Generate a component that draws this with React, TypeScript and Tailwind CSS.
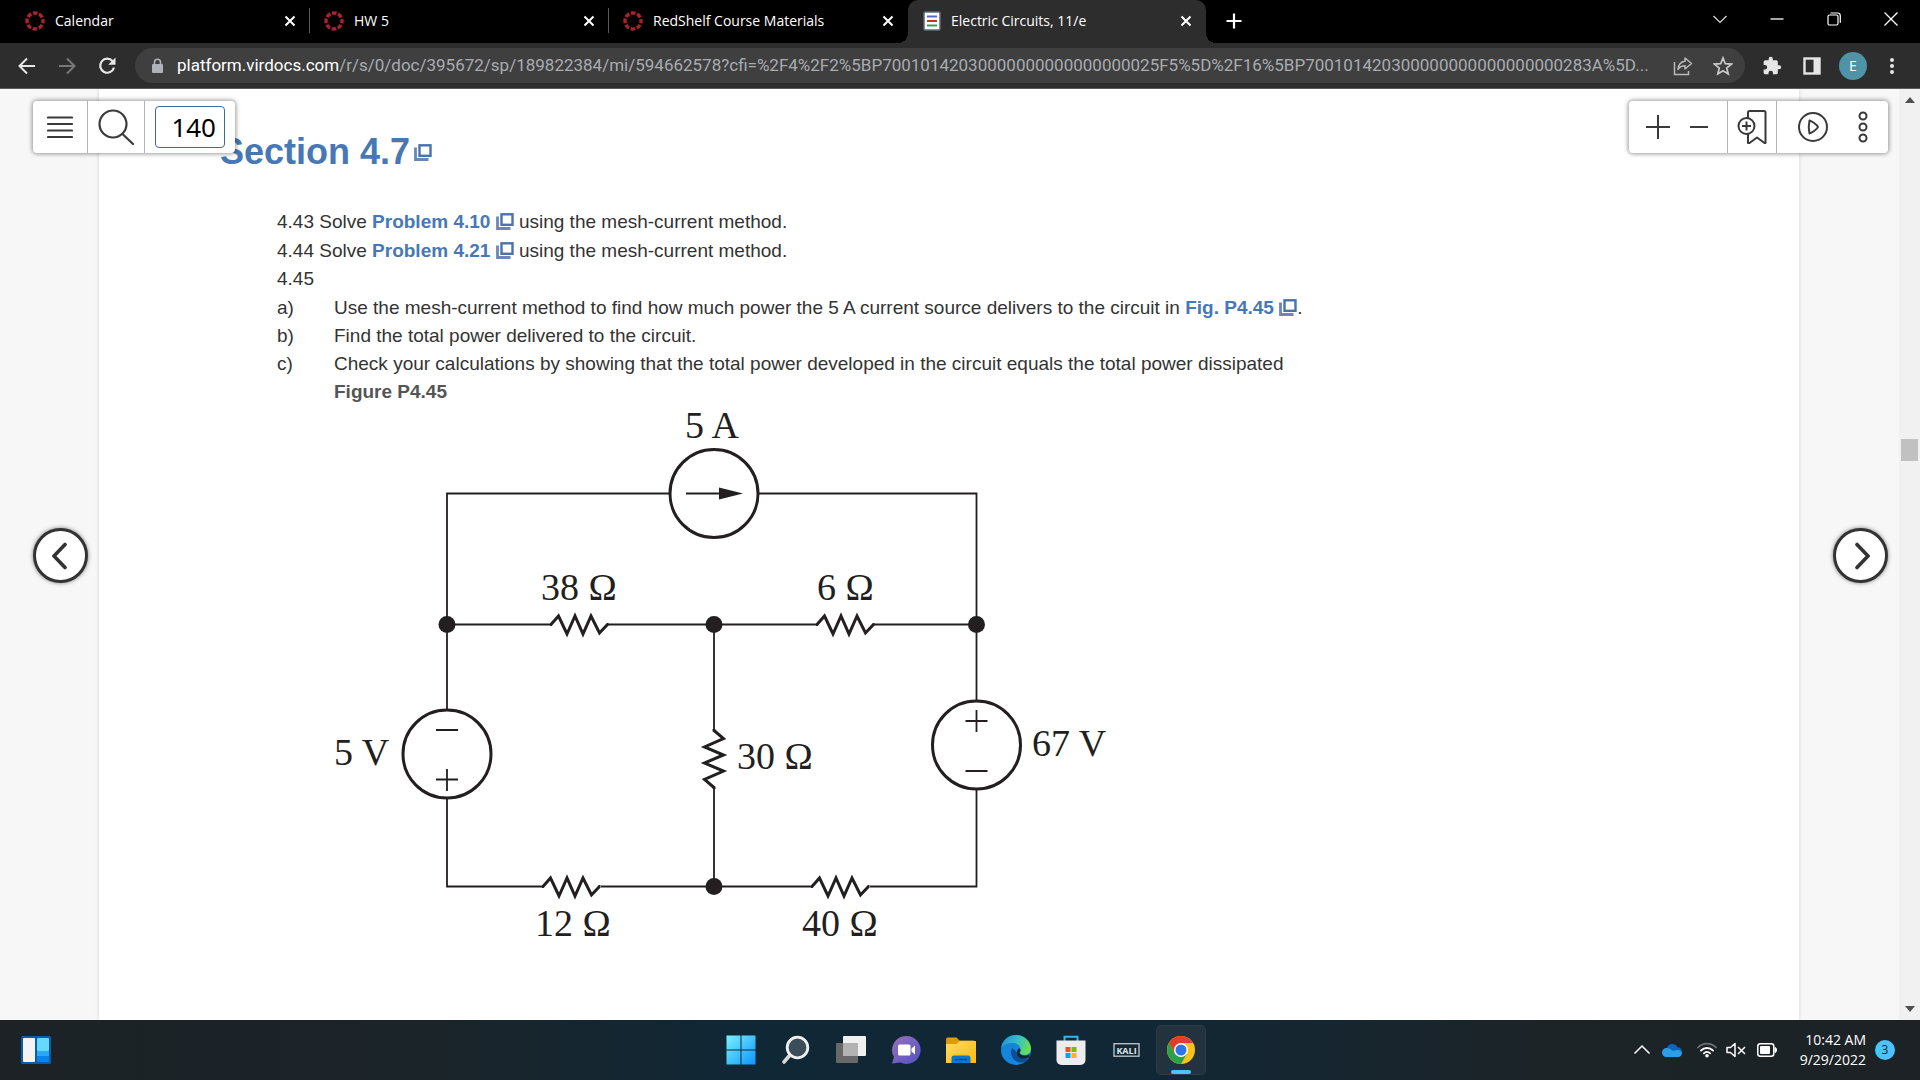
import React from "react";

const UI = "font-['Open_Sans','Noto_Sans',sans-serif]";

const ZEROS = "0".repeat(17);
const URL_PATH = `/r/s/0/doc/395672/sp/189822384/mi/594662578?cfi=%2F4%2F2%5BP7001014203${ZEROS}25F5%5D%2F16%5BP7001014203${ZEROS}283A%5D...`;

function CanvasLogo() {
  return (
    <svg width="20" height="20" viewBox="0 0 20 20" fill="none" aria-hidden="true">
      <circle cx="10" cy="10" r="8" stroke="#a9232f" strokeWidth="3.4" strokeDasharray="4.6 1.68" strokeDashoffset="2.3" />
    </svg>
  );
}

function BookLogo() {
  return (
    <svg width="18" height="20" viewBox="0 0 18 20" aria-hidden="true">
      <rect x="1" y="1" width="16" height="18" rx="1" fill="#fff" stroke="#5d6b78" strokeWidth="1.5" />
      <path d="M4 5.5h10" stroke="#4d6fb5" strokeWidth="2" />
      <path d="M4 10h10" stroke="#c9302c" strokeWidth="2" />
      <path d="M4 14.5h10" stroke="#3f9a5a" strokeWidth="2" />
    </svg>
  );
}

function Cross() {
  return (
    <svg width="12" height="12" viewBox="0 0 12 12" stroke="#fff" strokeWidth="2" aria-hidden="true">
      <path d="M1.5 1.5l9 9M10.5 1.5l-9 9" />
    </svg>
  );
}

function Tab({ title, divider }: { title: string; divider?: boolean }) {
  return (
    <div className="flex h-full w-[299px] shrink-0 items-center pb-[2px]">
      <button className="flex min-w-0 flex-1 items-center gap-[10px] pl-[14px] text-left">
        <CanvasLogo />
        <span className="truncate">{title}</span>
      </button>
      <button aria-label={`Close ${title}`} className="mr-[13px]">
        <Cross />
      </button>
      <span className={divider ? "h-[25px] w-px bg-[#5a5a5a]" : "h-[25px] w-px"} />
    </div>
  );
}

function TabStrip() {
  return (
    <div className="flex h-[43px] shrink-0 items-stretch bg-black pl-[11px] text-[14px] text-white">
      <Tab title="Calendar" divider />
      <Tab title="HW 5" divider />
      <Tab title="RedShelf Course Materials" />
      <div className="relative flex w-[298px] shrink-0 items-center rounded-t-[10px] bg-[#2d2d2d] pb-[2px]">
        <span className="absolute -left-[10px] bottom-0 size-[10px] bg-[radial-gradient(circle_at_0_0,#000_10px,#2d2d2d_10px)]" />
        <span className="absolute -right-[10px] bottom-0 size-[10px] bg-[radial-gradient(circle_at_100%_0,#000_10px,#2d2d2d_10px)]" />
        <button className="flex min-w-0 flex-1 items-center gap-[10px] pl-[15px] text-left">
          <BookLogo />
          <span className="truncate">Electric Circuits, 11/e</span>
        </button>
        <button aria-label="Close Electric Circuits" className="mr-[14px]">
          <Cross />
        </button>
      </div>
      <button aria-label="New tab" className="ml-[20px] pb-[2px]">
        <svg width="16" height="16" viewBox="0 0 16 16" stroke="#fff" strokeWidth="2.2">
          <path d="M8 .5v15M.5 8h15" />
        </svg>
      </button>
      <div className="mb-[6px] ml-auto flex items-center gap-[41px] pr-[21px]">
        <button aria-label="Search tabs">
          <svg width="16" height="16" viewBox="0 0 16 16" fill="none" stroke="#ddd" strokeWidth="1.2">
            <path d="M1.5 5L8 11.5 14.5 5" />
          </svg>
        </button>
        <button aria-label="Minimize">
          <svg width="16" height="16" viewBox="0 0 16 16" stroke="#fff" strokeWidth="1.3">
            <path d="M1.5 8h13" />
          </svg>
        </button>
        <button aria-label="Restore">
          <svg width="16" height="16" viewBox="0 0 16 16" fill="none" stroke="#fff" strokeWidth="1.2">
            <rect x="2" y="4" width="10" height="10" rx="1.5" />
            <path d="M4.5 2h7a2.800 2.800 0 0 1 2.800 2.800v7" />
          </svg>
        </button>
        <button aria-label="Close window">
          <svg width="16" height="16" viewBox="0 0 16 16" stroke="#fff" strokeWidth="1.3">
            <path d="M1.5 1.5l13 13M14.5 1.5l-13 13" />
          </svg>
        </button>
      </div>
    </div>
  );
}

function AddressBar() {
  return (
    <div className="flex h-[46px] shrink-0 items-center border-b border-[#5b5b5b] bg-[#2d2d2d] pl-[17px] pr-[23px]">
      <button aria-label="Back">
        <svg width="20" height="20" viewBox="0 0 20 20" fill="none" stroke="#e6e6e6" strokeWidth="2">
          <path d="M18 10H3M10 2.5L2.5 10l7.5 7.5" />
        </svg>
      </button>
      <button aria-label="Forward" className="ml-[20px]">
        <svg width="20" height="20" viewBox="0 0 20 20" fill="none" stroke="#777" strokeWidth="2">
          <path d="M2 10h15M10 2.5l7.5 7.5-7.5 7.5" />
        </svg>
      </button>
      <button aria-label="Reload" className="ml-[20px]">
        <svg width="20" height="20" viewBox="0 0 20 20" fill="none" stroke="#e6e6e6" strokeWidth="2.2">
          <path d="M15.600 5.200A7 7 0 1 0 17 11.500" />
          <path d="M18.5 1.500v7.300h-7.300z" fill="#e6e6e6" stroke="none" />
        </svg>
      </button>
      <div className="ml-[18px] flex h-[35px] min-w-0 flex-1 items-center rounded-full bg-[#3f3f3f] pl-[16px] pr-[12px]">
        <svg width="13" height="16" viewBox="0 0 13 16" fill="none" aria-hidden="true">
          <rect x="1" y="6" width="11" height="9" rx="1" fill="#aeb2b8" />
          <path d="M3.5 7V4.200a3 3 0 0 1 6 0V7" stroke="#aeb2b8" strokeWidth="1.6" />
        </svg>
        <div className="ml-[13px] min-w-0 flex-1 whitespace-nowrap font-['Roboto',sans-serif] text-[17px] text-[#a9acb1]">
          <span className="text-white">platform.virdocs.com</span>
          {URL_PATH}
        </div>
        <button aria-label="Share" className="ml-[20px]">
          <svg width="20" height="20" viewBox="0 0 20 20" fill="none" stroke="#b9b9b9" strokeWidth="1.5">
            <path d="M1.5 6v12.500h14V15" />
            <path d="M12 2l6.500 5.500L12 13v-3.300c-3.500 0-5.500 1.200-7 3.800.3-4.500 2.700-7.700 7-8.200z" strokeLinejoin="round" />
          </svg>
        </button>
        <button aria-label="Bookmark" className="ml-[20px]">
          <svg width="20" height="20" viewBox="0 0 20 20" fill="none" stroke="#c9c9c9" strokeWidth="1.7">
            <path d="M10 2l2.300 5.700 6.100.4-4.700 3.900 1.500 6L10 14.700 4.800 18l1.500-6-4.700-3.900 6.100-.4z" />
          </svg>
        </button>
      </div>
      <button aria-label="Extensions" className="ml-[17px]">
        <svg width="20" height="20" viewBox="0 0 24 24" fill="#e6e6e6">
          <path d="M20.500 11H19V7a2 2 0 0 0-2-2h-4V3.500a2.500 2.500 0 0 0-5 0V5H4a2 2 0 0 0-2 2v3.800h1.500a2.700 2.700 0 0 1 0 5.400H2V20a2 2 0 0 0 2 2h3.800v-1.500a2.700 2.700 0 0 1 5.400 0V22H17a2 2 0 0 0 2-2v-4h1.500a2.500 2.500 0 0 0 0-5z" />
        </svg>
      </button>
      <button aria-label="Side panel" className="ml-[21px]">
        <svg width="18" height="18" viewBox="0 0 18 18" fill="none">
          <rect x="1.5" y="1.5" width="15" height="15" stroke="#e6e6e6" strokeWidth="2.4" />
          <path d="M10.500 1h6.500v16h-6.500z" fill="#e6e6e6" />
        </svg>
      </button>
      <button className="ml-[18px] grid size-[28px] place-items-center rounded-full bg-[#4f93a6] text-[14px] text-white">E</button>
      <button aria-label="Menu" className="ml-[20px]">
        <svg width="10" height="20" viewBox="0 0 10 20" fill="#e6e6e6">
          <circle cx="5" cy="4" r="2" />
          <circle cx="5" cy="10" r="2" />
          <circle cx="5" cy="16" r="2" />
        </svg>
      </button>
    </div>
  );
}

function PopupIcon() {
  return (
    <svg width="18" height="17" viewBox="0 0 18 17" fill="none" className="inline-block align-[-2px]" aria-hidden="true">
      <rect x="5.5" y="1.3" width="11" height="10.500" stroke="#4a73aa" strokeWidth="2.400" />
      <path d="M1.5 3.500v12h13" stroke="#6a88b6" strokeWidth="2.800" />
    </svg>
  );
}

function BookLink({ children }: { children: React.ReactNode }) {
  return (
    <a href="#figure" className="font-bold text-[#4778b6]">
      {children} <PopupIcon />
    </a>
  );
}

function HResistor({ x, y }: { x: number; y: number }) {
  return (
    <path
      d={`M${x} ${y}h1l7.500-8.500 8.500 18 8-18 8 18 8-18 8.500 17 8-8.500h1`}
      fill="none"
      stroke="#231f20"
      strokeWidth="3"
    />
  );
}

const LABELS: [string, number, number][] = [
  ["5 A", 685, 438],
  ["38 Ω", 541, 600],
  ["6 Ω", 817, 600],
  ["5 V", 334, 765],
  ["30 Ω", 737, 769],
  ["67 V", 1032, 756],
  ["12 Ω", 535, 936],
  ["40 Ω", 802, 936],
];

function Circuit() {
  return (
    <svg width="800" height="550" viewBox="320 406 800 550" className="block shrink-0 overflow-visible" role="img" aria-label="Figure P4.45 circuit">
      <g fill="none" stroke="#231f20" strokeWidth="1.8">
        <path d="M447 709V493.500h222M758 493.500h218.500V701M447 798v88.500h96M601 886.500h211M870 886.500h106.500V789" />
        <path d="M447 624.500h104M608 624.500h210M874 624.500h102.500M714 624.500V731M714 787v99.500" />
        <path d="M436 730h22M436 779.500h22M447 769v22M965.500 721h22M976.500 710v22M965.500 771h22" />
        <path d="M686 493.500h36" />
      </g>
      <path d="M719 487.500l24 6-24 6z" fill="#231f20" />
      <HResistor x={550} y={624.5} />
      <HResistor x={816} y={624.5} />
      <HResistor x={542} y={886.5} />
      <HResistor x={811} y={886.5} />
      <path d="M714 729v1.500l9.500 8-19 8.500 19 8-19 8 19 8-19 8.500 9.500 8v1.500" fill="none" stroke="#231f20" strokeWidth="3" />
      <g fill="none" stroke="#231f20" strokeWidth="3">
        <circle cx="714" cy="493.5" r="44" />
        <circle cx="447" cy="754" r="44" />
        <circle cx="976.5" cy="745" r="44" />
      </g>
      <g fill="#231f20">
        <circle cx="447" cy="624.5" r="8.5" />
        <circle cx="714" cy="624.5" r="8.5" />
        <circle cx="976.5" cy="624.5" r="8.5" />
        <circle cx="714" cy="886.5" r="8.5" />
      </g>
      <g fill="#231f20" className="font-['Liberation_Serif',serif] text-[38px]">
        {LABELS.map(([t, x, y]) => (
          <text key={t} x={x} y={y}>{t}</text>
        ))}
      </g>
    </svg>
  );
}

function Article() {
  return (
    <main className="min-w-0 flex-1 bg-white pl-[121px] pt-[41px] font-['Liberation_Sans',Arial,sans-serif] text-[#333] shadow-[0_0_4px_rgba(0,0,0,0.15)]">
      <h1 className="flex items-center gap-[4px] text-[36px] font-bold leading-[44px] text-[#4778b6]">
        Section 4.7 <PopupIcon />
      </h1>
      <div className="pl-[57px] pt-[34px] text-[19px] leading-[28px]">
        <p className="pb-px">4.43 Solve <BookLink>Problem 4.10</BookLink> using the mesh-current method.</p>
        <p>4.44 Solve <BookLink>Problem 4.21</BookLink> using the mesh-current method.</p>
        <p className="pb-px">4.45</p>
        <ol>
          <li className="flex"><span className="w-[57px]">a)</span><span>Use the mesh-current method to find how much power the 5 A current source delivers to the circuit in <BookLink>Fig. P4.45</BookLink>.</span></li>
          <li className="flex"><span className="w-[57px]">b)</span><span>Find the total power delivered to the circuit.</span></li>
          <li className="flex"><span className="w-[57px]">c)</span><span>Check your calculations by showing that the total power developed in the circuit equals the total power dissipated</span></li>
        </ol>
      </div>
      <figure className="pl-[44px]">
        <figcaption className="pl-[70px] text-[19px] font-bold leading-[28px] text-[#555]">Figure P4.45</figcaption>
        <div className="pl-[56px]"><Circuit /></div>
      </figure>
    </main>
  );
}

const BOX = "absolute top-[12px] flex h-[52px] items-stretch rounded-[4px] bg-white shadow-[0_0_4px_1px_rgba(0,0,0,0.4)]";

function ReaderTools() {
  return (
    <>
      <div className={`${BOX} left-[33px] w-[202px]`}>
        <button aria-label="Contents" className="grid w-[55px] place-items-center border-r border-[#b5b5b5]">
          <svg width="26" height="26" viewBox="0 0 26 26" stroke="#3a3a3a" strokeWidth="2.2" strokeLinecap="round">
            <path d="M1 3.500h24M1 10h24M1 16.500h24M1 23h24" />
          </svg>
        </button>
        <button aria-label="Search" className="grid w-[57px] place-items-center border-r border-[#b5b5b5]">
          <svg width="36" height="36" viewBox="0 0 36 36" fill="none" stroke="#3a3a3a" strokeWidth="2.2" strokeLinecap="round">
            <circle cx="15" cy="15" r="13.5" />
            <path d="M24.500 25L35 35" />
          </svg>
        </button>
        <div className="flex flex-1 items-center pl-[10px]">
          <input aria-label="Page" defaultValue="140" className="h-[42px] w-[70px] rounded-[4px] border border-[#3a6c9f] bg-white pr-[8px] text-right text-[26px] font-['Noto_Sans',sans-serif] text-black" />
        </div>
      </div>
      <div className={`${BOX} right-[32px] w-[259px]`}>
        <button aria-label="Zoom in" className="pl-[17px]">
          <svg width="24" height="24" viewBox="0 0 24 24" stroke="#3a3a3a" strokeWidth="2">
            <path d="M0 12h24M12 0v24" />
          </svg>
        </button>
        <button aria-label="Zoom out" className="w-[58px] border-r border-[#b5b5b5] pl-[20px]">
          <svg width="18" height="24" viewBox="0 0 18 24" stroke="#3a3a3a" strokeWidth="2">
            <path d="M0 12h18" />
          </svg>
        </button>
        <button aria-label="Add bookmark" className="grid w-[49px] place-items-center border-r border-[#b5b5b5]">
          <svg width="30" height="36" viewBox="0 0 30 36" fill="none" stroke="#3a3a3a" strokeWidth="2">
            <path d="M11 9V3.500A1.500 1.500 0 0 1 12.500 2H27a1.500 1.500 0 0 1 1.500 1.500V34h-1L20 28.500 12.500 34H11V25" strokeLinejoin="round" />
            <circle cx="9.5" cy="17" r="8" fill="#fff" />
            <path d="M5 17h9M9.500 12.500v9" />
          </svg>
        </button>
        <button aria-label="Play" className="pl-[20px]">
          <svg width="32" height="32" viewBox="0 0 32 32" fill="none" stroke="#3a3a3a" strokeWidth="2">
            <circle cx="16" cy="16" r="14" />
            <path d="M12.500 9.500c2 .5 7.500 4 8.500 6.500-1 2.500-6.500 6-8.500 6.500-.7-3-.7-10 0-13z" strokeLinejoin="round" />
          </svg>
        </button>
        <button aria-label="More" className="pl-[28px]">
          <svg width="12" height="32" viewBox="0 0 12 32" fill="none" stroke="#3a3a3a" strokeWidth="2">
            <circle cx="6" cy="5" r="3.5" />
            <circle cx="6" cy="16" r="3.5" />
            <circle cx="6" cy="27" r="3.5" />
          </svg>
        </button>
      </div>
    </>
  );
}

const ROUND = "absolute top-[439px] grid size-[55px] place-items-center rounded-full border-[3px] border-[#333] bg-white shadow-[0_0_4px_rgba(0,0,0,0.5)]";

function Viewer() {
  return (
    <div className="relative flex min-h-0 flex-1 overflow-hidden bg-[#f7f7f7]">
      <div className="w-[99px] shrink-0" />
      <Article />
      <div className="w-[100px] shrink-0" />
      <div className="flex w-[21px] shrink-0 flex-col items-center justify-between bg-[#f1f1f1] py-[8px]">
        <svg width="10" height="6" viewBox="0 0 10 6" fill="#505050"><path d="M5 0l5 6H0z" /></svg>
        <span className="mb-[210px] h-[22px] w-[17px] bg-[#c1c1c1]" />
        <svg width="10" height="6" viewBox="0 0 10 6" fill="#505050"><path d="M5 6l5-6H0z" /></svg>
      </div>
      <ReaderTools />
      <button aria-label="Previous page" className={`${ROUND} left-[33px]`}>
        <svg width="18" height="28" viewBox="0 0 18 28" fill="none" stroke="#333" strokeWidth="3.6" strokeLinecap="round"><path d="M13 2.500L2 14l11 11.500" /></svg>
      </button>
      <button aria-label="Next page" className={`${ROUND} right-[32px]`}>
        <svg width="18" height="28" viewBox="0 0 18 28" fill="none" stroke="#333" strokeWidth="3.6" strokeLinecap="round"><path d="M5 2.500L16 14 5 25.500" /></svg>
      </button>
    </div>
  );
}

function Gradient({ id, from, to }: { id: string; from: string; to: string }) {
  return (
    <linearGradient id={id} x1="0" y1="0" x2="1" y2="1">
      <stop offset="0" stopColor={from} />
      <stop offset="1" stopColor={to} />
    </linearGradient>
  );
}

const APPS: [string, React.ReactNode][] = [
  ["Start", <>
    <defs><linearGradient id="win" gradientUnits="userSpaceOnUse" x1="0" y1="0" x2="30" y2="30"><stop offset="0" stopColor="#7df3ff" /><stop offset="1" stopColor="#0a93fb" /></linearGradient></defs>
    <path fill="url(#win)" d="M.5.5h14v14H.5zM15.500.5h14v14h-14zM.5 15.500h14v14H.5zM15.500 15.500h14v14h-14z" />
  </>],
  ["Search", <>
    <path d="M9 20l-6 7" stroke="#d9d9d9" strokeWidth="3.6" strokeLinecap="round" />
    <circle cx="16.5" cy="12.5" r="10.3" fill="#3b4d59" stroke="#eee" strokeWidth="2.8" />
  </>],
  ["Task view", <>
    <rect x="7" y="1" width="23" height="20" rx="1" fill="#f0f0f0" />
    <rect x="0" y="8" width="22" height="20" rx="1" fill="#686868" />
    <rect x="7" y="8" width="15" height="13" fill="#b3b3b3" />
  </>],
  ["Chat", <>
    <defs><Gradient id="chat" from="#9a70b5" to="#4f52c8" /></defs>
    <path d="M15.500 1a14 14 0 1 1-6 26.600L1 28.500l2-6.500A14 14 0 0 1 15.500 1z" fill="url(#chat)" />
    <rect x="7" y="9.5" width="12.5" height="11" rx="1.5" fill="#fff" />
    <path d="M20.500 13.500l3.500-3v9l-3.500-3z" fill="#fff" />
  </>],
  ["File Explorer", <>
    <defs><Gradient id="fold" from="#ffdc60" to="#fbb911" /></defs>
    <path d="M0 4.500a2 2 0 0 1 2-2h8.500l3 3H28V14H0z" fill="#dd9b09" />
    <path d="M0 9h10.500l3-3H30v22H0z" fill="url(#fold)" />
    <path d="M5.500 28v-5a2.500 2.500 0 0 1 2.500-2.500h14a2.500 2.500 0 0 1 2.500 2.500v5z" fill="#0d76cc" />
    <path d="M9 24.500h12" stroke="#0a4a80" strokeWidth="1.3" />
  </>],
  ["Edge", <>
    <defs>
      <linearGradient id="ed1" x1="0" y1=".3" x2="1" y2=".6"><stop offset="0" stopColor="#2093dc" /><stop offset=".5" stopColor="#34c1c4" /><stop offset="1" stopColor="#6be04e" /></linearGradient>
      <linearGradient id="ed2" x1="0" y1="0" x2=".4" y2="1"><stop offset="0" stopColor="#1683cf" /><stop offset="1" stopColor="#1287e0" /></linearGradient>
    </defs>
    <circle cx="15" cy="15" r="15" fill="url(#ed2)" />
    <path d="M11 13c-3 7 2 14.500 9.500 14.500 3 0 5.500-1.500 7.500-4-5 1.500-11-1-11.500-6z" fill="#104d97" />
    <path d="M.2 12.500C1.500 5 7.500 0 15 0c8.500 0 15 6.500 15 13.500 0 4-3 6.500-6.500 6.500-3 0-5-1-5-2.500 0-1 1-1.500 1-3.500 0-3-3-6-7.500-6-5.500 0-9.500 2-11.800 4.500z" fill="url(#ed1)" />
    <path d="M28.500 22c-3 2.500-10 3-12-2-1-2.500-.5-5 1-6.500 1.500 0 2.500.5 2 2.500-1 1.500-1.500 2 .5 3.500 2 1.500 6 1.500 8.500-.5z" fill="#112734" />
  </>],
  ["Store", <>
    <path d="M8.500 6V1.800h13V6" fill="none" stroke="#2db9ee" strokeWidth="2" />
    <path d="M.5 5.500h29V25a5 5 0 0 1-5 5h-19a5 5 0 0 1-5-5z" fill="#ededed" />
    <path d="M9.500 12h5v5h-5z" fill="#f25022" /><path d="M15.500 12h5v5h-5z" fill="#7fba00" />
    <path d="M9.500 18h5v5h-5z" fill="#00a4ef" /><path d="M15.500 18h5v5h-5z" fill="#ffb900" />
  </>],
  ["Kali", <>
    <rect x="3" y="8.7" width="25" height="12.5" fill="none" stroke="#b6bfc5" strokeWidth="1.4" />
    <text x="15.5" y="18.5" textAnchor="middle" fill="#e2e6e8" className="text-[9px] font-bold">KALI</text>
  </>],
];

function Chrome() {
  return (
    <svg width="28" height="28" viewBox="0 0 28 28">
      <circle cx="14" cy="14" r="14" fill="#fbc116" />
      <path d="M1.900 7A14 14 0 0 0 14 28l6-10.500-6-3.500-6 3.500z" fill="#2aa148" />
      <path d="M14 14l-6 3.500L1.900 7A14 14 0 0 1 26.100 7H14z" fill="#e33b2e" />
      <circle cx="14" cy="14" r="7" fill="#fff" />
      <circle cx="14" cy="14" r="5.5" fill="#2b76e8" />
    </svg>
  );
}

function Taskbar() {
  return (
    <footer className="grid h-[60px] shrink-0 grid-cols-[1fr_auto_1fr] items-center bg-[linear-gradient(90deg,#1c2226_0%,#1b2429_22%,#102735_38%,#112735_60%,#1c2428_80%,#1c2226_100%)] text-white">
      <button aria-label="Widgets" className="ml-[21px] justify-self-start">
        <svg width="30" height="28" viewBox="0 0 30 28">
          <rect width="30" height="28" rx="1.5" fill="#0b5cab" />
          <rect x="2" y="2" width="12" height="24" rx="1" fill="#f3f3f3" />
          <rect x="16" y="2" width="12" height="13" rx="1" fill="#66d9ff" />
          <rect x="16" y="15" width="12" height="5" fill="#2aa9f7" />
          <rect x="16" y="20" width="12" height="6" rx="1" fill="#0a83ea" />
        </svg>
      </button>
      <nav className="flex items-center gap-[25px] pl-[12px]">
        {APPS.map(([name, art]) => (
          <button key={name} aria-label={name}>
            <svg width="30" height="30" viewBox="0 0 30 30" fill="none">{art}</svg>
          </button>
        ))}
        <button aria-label="Chrome" className="relative -ml-[10px] grid size-[50px] place-items-center rounded-[5px] border border-[#2c3d49] bg-[#22333f]">
          <Chrome />
          <span className="absolute bottom-0 left-[14px] h-[4px] w-[20px] rounded-full bg-[#4cc2ff]" />
        </button>
      </nav>
      <div className="mr-[25px] flex items-center justify-self-end">
        <button aria-label="Hidden icons">
          <svg width="18" height="18" viewBox="0 0 18 18" fill="none" stroke="#fff" strokeWidth="1.5"><path d="M1.500 12.500L9 5l7.500 7.500" /></svg>
        </button>
        <button aria-label="OneDrive" className="ml-[11px]">
          <svg width="20" height="14" viewBox="0 0 20 14">
            <path d="M5 5a5.500 5.500 0 0 1 10.300-.8A4.500 4.500 0 0 1 20 9l-8 2-10-2z" fill="#0f65bd" />
            <path d="M4.500 5C8 4.500 10 8 12 8c2-1 5-2 8 1.500a4 4 0 0 1-4 4.500H4.500a4.500 4.500 0 0 1 0-9z" fill="#2a9ee8" />
          </svg>
        </button>
        <button aria-label="Wi-Fi" className="ml-[15px]">
          <svg width="20" height="16" viewBox="0 0 20 16" fill="none" strokeLinecap="round" strokeWidth="1.8">
            <path d="M1 5.500a12.500 12.500 0 0 1 18 0" stroke="#6b7072" />
            <path d="M4 8.500a8.500 8.500 0 0 1 12 0M6.800 11.300a4.600 4.600 0 0 1 6.400 0" stroke="#fff" />
            <circle cx="10" cy="13.8" r="1.8" fill="#fff" />
          </svg>
        </button>
        <button aria-label="Volume" className="ml-[9px]">
          <svg width="20" height="16" viewBox="0 0 20 16" fill="none" stroke="#fff" strokeWidth="1.5">
            <path d="M1 5.500h3.500L9 1.500v13l-4.500-4H1z" strokeLinejoin="round" />
            <path d="M12 5l7 7M19 5l-7 7" />
          </svg>
        </button>
        <button aria-label="Battery" className="ml-[11px]">
          <svg width="20" height="14" viewBox="0 0 20 14" fill="none">
            <rect x=".8" y=".8" width="16" height="12.4" rx="2.5" stroke="#fff" strokeWidth="1.5" />
            <rect x="3" y="3" width="10" height="8" rx="1" fill="#fff" />
            <path d="M18 4.500c2 0 2 5 0 5z" fill="#fff" stroke="#fff" />
          </svg>
        </button>
        <button className="ml-[23px] text-right text-[14px] leading-[20px]">
          10:42 AM<br />9/29/2022
        </button>
        <button className="ml-[9px] grid size-[20px] place-items-center rounded-full bg-[#4cc2ff] text-[12px] leading-none text-[#10242f]">3</button>
      </div>
    </footer>
  );
}

export default function App() {
  return (
    <div className={`${UI} flex h-screen flex-col overflow-hidden`}>
      <TabStrip />
      <AddressBar />
      <Viewer />
      <Taskbar />
    </div>
  );
}
